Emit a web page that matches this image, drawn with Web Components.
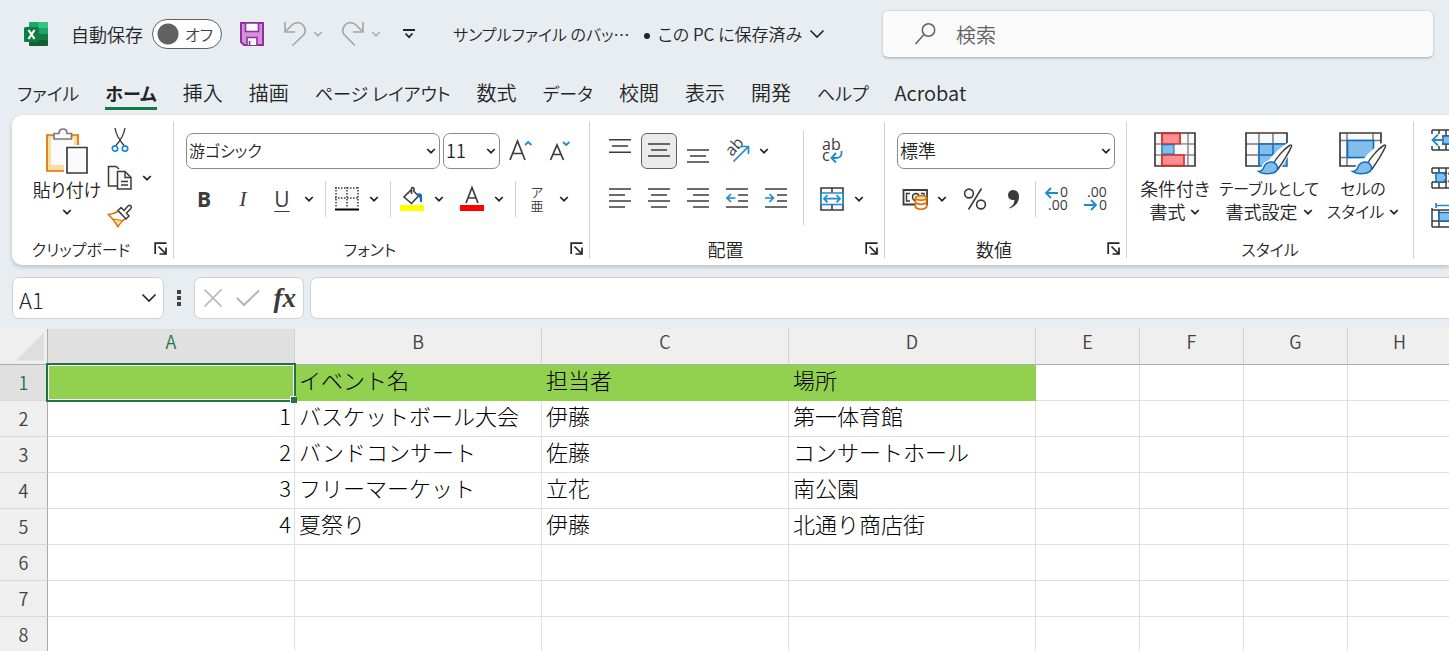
<!DOCTYPE html>
<html lang="ja">
<head>
<meta charset="utf-8">
<title>サンプルファイル - Excel</title>
<style>
html, body { margin: 0; height: 100%; overflow: hidden; }
body {
  background: #e8edf1; color: #242424;
  font-family: "Noto Sans CJK JP", "Noto Sans", sans-serif;
  font-size: 18px; font-weight: 350; line-height: 24px;
}
</style>
</head>
<body>
<excel-window></excel-window>

<script>
const DARK = '#3b3b3b', BLUE = '#1e8bd0';
const lines = (...rows) => rows.map(([x1, x2, y]) => `<path d="M${x1} ${y}H${x2}" stroke="${DARK}" stroke-width="1.6"/>`).join('');
const brush = `<path d="M44.500 13.500C39 17 31 26 28 32.500L33 37C38 30 44 20 46.500 14.500C47 13 46 12.500 44.500 13.500Z" fill="#fafafa" stroke="${DARK}" stroke-width="1.500"/><path d="M27 30C22 29.500 19.500 33 18.500 36C17.500 38.500 15.500 39.500 13.500 39.500C18 43 31 42.500 32.500 37C33 33.500 30.500 30.500 27 30Z" fill="#83bdea" stroke="#0f6cbd" stroke-width="1.500"/>`;
const digits = (x, y, s) => `<text x="${x}" y="${y}" font-family="Open Sans" font-size="14" font-weight="400" fill="${DARK}">${s}</text>`;

/* name: [width, height, svg content] */
const ICONS = {
  excel: [24, 24, `<path d="M6 0H15V6H5V1Q5 0 6 0Z" fill="#21a366"/><path d="M14.500 0H23Q24 0 24 1V6H14.500Z" fill="#33c481"/><path d="M5 6H14.500V12H5Z" fill="#107c41"/><path d="M14.500 6H24V12H14.500Z" fill="#21a366"/><path d="M5 12H14.500V18H5Z" fill="#185c37"/><path d="M14.500 12H24V18H14.500Z" fill="#107c41"/><path d="M5 18H24V23Q24 24 23 24H6Q5 24 5 23Z" fill="#185c37"/><rect y="5" width="15" height="15" rx="1.500" fill="#107c41"/><path d="M4.500 8L10.500 17M10.500 8L4.500 17" stroke="#fff" stroke-width="2.200"/>`],
  save: [24, 24, `<path d="M1 1H23V23H4L1 20Z" fill="#d591dc" stroke="#8f2fa0" stroke-width="2"/><path d="M5.500 1H18.500V9.500H5.500Z" fill="#fafafa" stroke="#8f2fa0" stroke-width="1.600"/><path d="M7 23V15.500H17V23" fill="#fafafa" stroke="#8f2fa0" stroke-width="1.600"/><path d="M9.500 19V23" stroke="#8f2fa0" stroke-width="1.600"/>`],
  undo: [24, 26, `<path d="M2 1V11H12M2.500 10.500L9 4C13 0 19 1.500 21 5.500C23 9 22 12.500 20 14.500L9.500 24.500" stroke="#a6a6a6" stroke-width="1.700"/>`],
  redo: [24, 26, `<path d="M22 1V11H12M21.500 10.500L15 4C11 0 5 1.500 3 5.500C1 9 2 12.500 4 14.500L14 24.500" stroke="#a6a6a6" stroke-width="1.700"/>`],
  chevron: [10, 6, `<path d="M1.200 1L5 4.700L8.800 1" stroke="currentColor" stroke-width="1.700"/>`],
  chevronLarge: [16, 10, `<path d="M1.500 1.500L8 8L14.500 1.500" stroke="currentColor" stroke-width="1.600"/>`],
  customize: [12, 10, `<path d="M0 1H12" stroke="#242424" stroke-width="2"/><path d="M2.500 4.500L6 8.200L9.500 4.500" stroke="#242424" stroke-width="1.800"/>`],
  search: [24, 24, `<circle cx="14.500" cy="8" r="6.200" stroke="#616161" stroke-width="1.500"/><path d="M10 12.500L1.500 22" stroke="#616161" stroke-width="1.500"/>`],
  launcher: [14, 14, `<path d="M1.200 12V1.200H12.500" stroke="#242424" stroke-width="1.700"/><path d="M4.500 4.500L11.500 11.500M12 5.500V12H5.500" stroke="#242424" stroke-width="1.700"/>`],
  paste: [44, 48, `<path d="M2 7H33V43H2Z" fill="#f8dca0" stroke="#e07000" stroke-width="1.700"/><path d="M6 10H29V37H6Z" fill="#fafafa"/><path d="M9 11V5.500H14Q14 1 18 1Q22 1 22 5.500H26.500V11Z" fill="#fafafa" stroke="#7b7b7b" stroke-width="1.700"/><path d="M19 17H43V47H19Z" fill="#fff"/><path d="M22 19.500H42V45H22Z" fill="#fafafa" stroke="${DARK}" stroke-width="1.700"/>`],
  cut: [18, 26, `<path d="M4 1C5 7 8 13 13.500 19M14 1C13 7 10 13 4.500 19" stroke="${DARK}" stroke-width="1.400"/><circle cx="4" cy="21.500" r="2.700" stroke="${BLUE}" stroke-width="1.700"/><circle cx="14" cy="21.500" r="2.700" stroke="${BLUE}" stroke-width="1.700"/>`],
  copy: [26, 26, `<path d="M10 21H1.500V1.500H9L12 4" fill="#fafafa" stroke="${DARK}" stroke-width="1.500"/><path d="M10.500 6.500H18L24 12.500V24H10.500Z" fill="#fafafa" stroke="${DARK}" stroke-width="1.500"/><path d="M18 6.500V12.500H24M14 16.500H21M14 20H21" stroke="${DARK}" stroke-width="1.400"/>`],
  painter: [26, 24, `<path d="M1.500 10.500Q7 10 11.500 7L19 14.500Q14 17 11 22.500Q7 16 1.500 10.500Z" fill="#fff" stroke="#e07000" stroke-width="1.600"/><path d="M6 15L15.500 16.500L11 22Z" fill="#f8dca0" stroke="#e07000"/><path d="M11 6.500L14 3.500L17 6.500L21 2Q22.500 .5 24 2Q25 3.500 23.500 5L19.500 9L22 12L19 15Z" fill="#fafafa" stroke="${DARK}" stroke-width="1.500"/>`],
  borders: [24, 24, `<path d="M1 1H23V21H1Z" fill="#fafafa"/><path d="M0 1H24M0 11H24" stroke="${DARK}" stroke-width="1.500" stroke-dasharray="1.500 1.500"/><path d="M1 0V21M12 0V21M23 0V21" stroke="${DARK}" stroke-width="1.500" stroke-dasharray="1.500 1.500"/><path d="M0 22.500H24" stroke="#000" stroke-width="2"/>`],
  fill: [24, 26, `<path d="M11.500 3.500L4 11L11.500 17.500L18.500 10L14 5.500V3Q14 1.500 12.500 1.500Q11.500 1.500 11.500 3V8" fill="#fafafa" stroke="${DARK}" stroke-width="1.600"/><path d="M16 8Q21 6 22 9V16H20Q20 10 17.500 9.500Z" fill="#0f6cbd"/><path d="M0 19H24V25H0Z" fill="#ff0"/>`],
  fontColor: [24, 26, `<path d="M6 17L12 1.500L18 17M8 12H16" stroke="${DARK}" stroke-width="1.700"/><path d="M0 19H24V25H0Z" fill="#f00"/>`],
  grow: [24, 24, `<path d="M1 21L8.500 2L16 21M3.800 14.500H13.200" stroke="${DARK}" stroke-width="1.700"/><path d="M16 6L19.200 3L22.500 6" stroke="${BLUE}" stroke-width="1.800"/>`],
  shrink: [22, 24, `<path d="M1.500 21L8 6L14.500 21M4 15.500H12" stroke="${DARK}" stroke-width="1.700"/><path d="M14 3L17.200 6L20.500 3" stroke="${BLUE}" stroke-width="1.800"/>`],
  top: [24, 24, lines([1, 23, 0.8], [4, 20, 7], [1, 23, 13.2]) ],
  middle: [24, 24, lines([1, 23, 5], [4, 20, 11], [1, 23, 17])],
  bottom: [24, 24, lines([1, 23, 11], [4, 20, 17], [1, 23, 23])],
  left: [24, 24, lines([1, 23, 2], [1, 17, 8], [1, 23, 14], [1, 17, 20])],
  center: [24, 24, lines([1, 23, 2], [4, 20, 8], [1, 23, 14], [4, 20, 20])],
  right: [24, 24, lines([1, 23, 2], [7, 23, 8], [1, 23, 14], [7, 23, 20])],
  outdent: [24, 24, lines([1, 23, 2], [13, 23, 8], [13, 23, 14], [1, 23, 20]) + `<path d="M10.500 11H2M6 7L2 11L6 15" stroke="${BLUE}" stroke-width="1.700"/>`],
  indent: [24, 24, lines([1, 23, 2], [13, 23, 8], [13, 23, 14], [1, 23, 20]) + `<path d="M1 11H9.500M5.500 7L9.500 11L5.500 15" stroke="${BLUE}" stroke-width="1.700"/>`],
  orient: [26, 26, `<text x="0" y="0" transform="translate(8 19) rotate(-48)" font-family="Open Sans" font-size="16" font-weight="400" fill="${DARK}">ab</text><path d="M9.500 23.500L24 9M17 8.500H24.500V16" stroke="${BLUE}" stroke-width="1.700"/>`],
  wrap: [24, 26, `<text x="2" y="12" font-family="Open Sans" font-size="16" font-weight="400" fill="${DARK}">ab</text><text x="2" y="23" font-family="Open Sans" font-size="16" font-weight="400" fill="${DARK}">c</text><path d="M21.500 13Q22.500 20 16 20H11.500M16 15L11.500 20L16 24.500" stroke="${BLUE}" stroke-width="1.900"/>`],
  merge: [24, 24, `<path d="M1 1H23V23H1ZM12 1V23" fill="#fafafa" stroke="${DARK}" stroke-width="1.600"/><path d="M1 6H23V17.500H1Z" fill="#fafafa" stroke="${BLUE}" stroke-width="1.700"/><path d="M4 11.700H20M7.500 8L4 11.700L7.500 15.400M16.500 8L20 11.700L16.500 15.400" stroke="${BLUE}" stroke-width="1.700"/>`],
  cash: [26, 24, `<path d="M1.500 3H25V17.500H1.500Z" fill="#fafafa" stroke="${DARK}" stroke-width="1.800"/><path d="M8 6.500H4.500V14H8M14 14Q10.500 13 10.500 10T14 6.500Q16.500 6.500 17 9M19 6.500H22V9" stroke="${DARK}" stroke-width="1.400"/><path d="M13.500 11V20.500Q19 24 24.500 20.500V11Z" fill="#fff" stroke="#e07000" stroke-width="1.600"/><ellipse cx="19" cy="11" rx="5.500" ry="2.200" fill="#f8dca0" stroke="#e07000" stroke-width="1.600"/><path d="M13.500 15.800Q19 19 24.500 15.800" stroke="#e07000" stroke-width="1.600"/>`],
  percent: [24, 24, `<circle cx="6" cy="6.500" r="4.400" stroke="${DARK}" stroke-width="1.600"/><circle cx="18" cy="17.500" r="4.400" stroke="${DARK}" stroke-width="1.600"/><path d="M18.500 1.500L5.500 22.500" stroke="${DARK}" stroke-width="1.600"/>`],
  comma: [14, 20, `<path d="M2 19Q7 16.500 7.500 11Q1 11.500 1 6Q1.500 1 6.500 1Q12 1.500 12 7.500Q12 16 2.500 19.500Z" fill="${DARK}"/>`],
  decUp: [26, 26, digits(16, 11, '0') + digits(4, 24, '.00') + `<path d="M14 7H2M7 2L2 7L7 12" stroke="${BLUE}" stroke-width="1.800"/>`],
  decDown: [26, 26, digits(4, 11, '.00') + digits(16, 24, '0') + `<path d="M1 19H13M8 14L13 19L8 24" stroke="${BLUE}" stroke-width="1.800"/>`],
  condFormat: [42, 36, `<path d="M1 1H41V34H1Z" fill="#fafafa"/><path d="M8 1V34M26 1V34M34 1V34M1 12H41M1 23H41" stroke="#8a8a8a" stroke-width="1.500"/><path d="M1 1H41V34H1Z" stroke="${DARK}" stroke-width="1.700"/><path d="M8 1.500H26V12H8ZM8 23H30V33.500H8Z" fill="#fc8f95" stroke="#e0281e" stroke-width="1.600"/><path d="M8 12.800H20V22H8Z" fill="#83bdea" stroke="#0f6cbd"/><path d="M21.500 12.800H33V22H21.500Z" fill="#fafafa"/>`],
  tableFormat: [48, 42, `<path d="M1 1H42V34H1Z" fill="#fafafa"/><path d="M14 1V34M28 1V12M1 12H42M1 23H14" stroke="#7a7a7a" stroke-width="1.500"/><path d="M15 34H1V1H42V12" stroke="${DARK}" stroke-width="1.700"/><path d="M14 12H42V34H14Z" fill="#83bdea"/><path d="M14 12H42V34H14ZM28 12V34M14 23H42" stroke="#0f6cbd" stroke-width="1.500"/><path d="M44 10Q30 19 24 28Q18 30 16 36L12 38L28 44L36 36L49 15Z" fill="#fff"/>` + brush],
  cellStyle: [48, 42, `<path d="M1 1H42V34H1Z" fill="#fafafa"/><path d="M8 1V34M34 1V10M1 8.500H42M1 25.500H20" stroke="#7a7a7a" stroke-width="1.500"/><path d="M22 34H1V1H42V12" stroke="${DARK}" stroke-width="1.700"/><path d="M8.500 8.500H34.500V25.500H8.500Z" fill="#83bdea" stroke="#0f6cbd" stroke-width="1.600"/><path d="M44 10Q30 19 24 28Q18 30 16 36L12 38L28 44L36 36L49 15Z" fill="#fff"/>` + brush],
  insertCells: [28, 24, `<path d="M1 2H28M1 22H28M1 2V22M8 2V22M15 2V22M22 2V22M1 8H28M1 16H28" stroke="${DARK}" stroke-width="1.500"/><path d="M12 8H28V16H12Z" fill="#83bdea" stroke="#0f6cbd" stroke-width="1.500"/><path d="M0 6H11V18H0Z" fill="#fff"/><path d="M12 12H1.500M7 6.500L1.500 12L7 17.500" stroke="${BLUE}" stroke-width="1.800"/>`],
  deleteCells: [28, 24, `<path d="M1 2H28M1 22H28M1 2V7M1 16V22M8 2V22M15 2V22M22 2V7M22 16V22M1 7H28M1 16H28" stroke="${DARK}" stroke-width="1.500"/><path d="M5 7H13L15.500 11.500L13 16H5Z" fill="#83bdea" stroke="#0f6cbd" stroke-width="1.500"/><path d="M16 6H28V17H16Z" fill="#fff"/><path d="M17 7L26 16M26 7L17 16" stroke="#e03a3a" stroke-width="1.800"/>`],
  formatCells: [28, 26, `<path d="M1 7H28M1 24H28M1 5V24M8 7V24M22 7V24M1 18H28" stroke="${DARK}" stroke-width="1.500"/><path d="M8 9.500H22V18H8Z" fill="#83bdea" stroke="#0f6cbd" stroke-width="1.500"/><path d="M5 2.500H28M5 0V5" stroke="${BLUE}" stroke-width="1.700"/>`],
  dots: [6, 18, `<path d="M1 1H5V5H1ZM1 7H5V11H1ZM1 13H5V17H1Z" fill="#424242"/>`],
  cancel: [20, 20, `<path d="M1.500 1.500L18.500 18.500M18.500 1.500L1.500 18.500" stroke="#b5b5b5" stroke-width="1.700"/>`],
  accept: [24, 18, `<path d="M1 9L8 16L23 1.500" stroke="#b5b5b5" stroke-width="2"/>`],
};

const define = (name, html) => customElements.define(name, class extends HTMLElement {
  connectedCallback() {
    if (this.shadowRoot) return;
    const root = this.attachShadow({ mode: 'open' });
    const template = document.createElement('template');
    template.innerHTML = typeof html === 'function' ? html(this) : html;
    root.append(template.content.cloneNode(true));
  }
});

const RESET = `*,:host{box-sizing:border-box}
button,input,select{font:inherit;color:inherit;margin:0;padding:0;border:0;background:none}
button{display:flex;align-items:center;justify-content:center;border-radius:6px}`;

define('ui-icon', el => {
  const [w, h, body] = ICONS[el.getAttribute('name')];
  return `<style>:host{display:block;flex:none}svg{display:block;overflow:visible}</style>
  <svg width="${w}" height="${h}" viewBox="0 0 ${w} ${h}" fill="none" aria-hidden="true">${body}</svg>`;
});

/* Square toolbar button; "menu" adds the drop-down arrow beside it. */
define('tool-button', el => `<style>${RESET}
  :host{display:flex;flex:none;height:36px;color:#3b3b3b}
  .main{width:36px;height:36px}
  .arrow{width:18px;height:36px;color:#242424}
  :host([pressed]) .main{background:#ebebeb;border:1px solid #616161}
  </style>
  <button class="main" aria-label="${el.getAttribute('label')}">${el.hasAttribute('icon') ? `<ui-icon name="${el.getAttribute('icon')}"></ui-icon>` : '<slot></slot>'}</button>
  ${el.hasAttribute('menu') ? `<button class="arrow" aria-label="${el.getAttribute('label')}のオプション"><ui-icon name="chevron"></ui-icon></button>` : ''}`);

/* Large button: picture over one or two lines of text. */
define('big-button', el => `<style>${RESET}
  :host{display:block;flex:none}
  button{width:100%;flex-direction:column;white-space:nowrap;line-height:23px}
  .pic{display:flex;align-items:flex-start;height:var(--pic,44px)}
  .text{display:flex;flex-direction:column;align-items:center}
  </style><button><span class="pic"><ui-icon name="${el.getAttribute('icon')}"></ui-icon></span><span class="text"><slot></slot></span></button>`);

define('combo-box', el => `<style>${RESET}
  :host{display:grid;height:36px;align-items:center}
  select,ui-icon{grid-area:1/1}
  select{appearance:none;width:100%;height:36px;padding:0 20px 2px 2px;border:1px solid #8a8a8a;border-radius:7px;background:#fff}
  ui-icon{justify-self:end;margin-right:4px;pointer-events:none}
  </style><select aria-label="${el.getAttribute('label')}"><option>${el.getAttribute('value')}</option></select><ui-icon name="chevron"></ui-icon>`);

define('ribbon-group', el => `<style>${RESET}
  :host{display:grid;grid-template-rows:1fr 18px;flex:none;border-right:1px solid #d1d1d1}
  :host([last]){border:0}
  .body{display:flex}
  footer{display:flex;align-items:center;line-height:18px;white-space:nowrap}
  footer span{flex:1;text-align:center}
  :host([kana]) footer span{font-size:16px}
  footer button{width:22px;height:18px;margin-right:1px}
  </style><div class="body"><slot></slot></div>
  <footer><span>${el.getAttribute('name') || ''}</span>${el.hasAttribute('launcher') ? `<button aria-label="${el.getAttribute('name')}の設定"><ui-icon name="launcher"></ui-icon></button>` : ''}</footer>`);

define('title-bar', `<style>${RESET}
  :host{display:flex;align-items:center;height:68px;padding:0 15px 0 24px;white-space:nowrap;font-feature-settings:"palt"}
  .left{display:flex;align-items:center;flex:none;width:858px}
  .auto{display:flex;align-items:center;gap:9px;margin-left:23px}
  .switch{display:grid;align-items:center;width:70px;height:30px}
  .switch input,.switch span{grid-area:1/1}
  .switch input{appearance:none;width:70px;height:30px;border:1px solid #616161;border-radius:15px;background:radial-gradient(circle at 15px 14px,#616161 10px,#fff 11px)}
  .switch span{justify-self:end;margin-right:9px;font-size:16px;color:#424242;pointer-events:none}
  .tools{display:flex;align-items:center;margin-left:18px;color:#b0b0b0}
  .tools button:nth-child(2){margin-left:19px}
  .tools button:nth-child(4){margin-left:12px}
  .arrow{width:22px;height:24px}
  .custom{margin-left:16px}
  .file{margin-left:38px;width:172px;font-size:16px}
  .dot{width:6px;height:6px;border-radius:3px;background:#242424;margin:4px 8px 0 19px}
  .state{gap:7px;font-size:17px}
  .search{flex:1;display:flex;align-items:center;gap:18px;height:48px;padding-left:31px;border:1px solid #d6d9dc;border-bottom-color:#bcbfc2;border-radius:6px;background:#fafafa;box-shadow:0 1px 2px #0002}
  .search input{flex:1;min-width:0;height:40px;font-size:20px;outline:0}
  .search input::placeholder{color:#616161;opacity:1}
  </style>
  <div class="left">
    <ui-icon name="excel"></ui-icon>
    <label class="auto">自動保存<span class="switch"><input type="checkbox" role="switch"><span>オフ</span></span></label>
    <div class="tools">
      <button aria-label="上書き保存"><ui-icon name="save"></ui-icon></button>
      <button aria-label="元に戻す"><ui-icon name="undo"></ui-icon></button><button class="arrow" aria-label="元に戻す履歴"><ui-icon name="chevron"></ui-icon></button>
      <button aria-label="やり直し"><ui-icon name="redo"></ui-icon></button><button class="arrow" aria-label="やり直し履歴"><ui-icon name="chevron"></ui-icon></button>
      <button class="custom" aria-label="クイック アクセス ツール バーのカスタマイズ"><ui-icon name="customize"></ui-icon></button>
    </div>
    <span class="file">サンプルファイル のバッ…</span><i class="dot"></i>
    <button class="state">この PC に保存済み<ui-icon name="chevronLarge"></ui-icon></button>
  </div>
  <label class="search"><ui-icon name="search"></ui-icon><input type="search" placeholder="検索" aria-label="検索"></label>`);

define('ribbon-tabs', `<style>${RESET}
  :host{display:block;height:47px;padding:10px 0 0 17px;font-size:20px;line-height:30px;font-feature-settings:"palt"}
  nav{display:flex;gap:26px;white-space:nowrap}
  a{color:inherit;text-decoration:none;height:32px;border-bottom:3px solid transparent}
  a.kana{font-size:18px}
  a[aria-current]{font-weight:700;border-color:#107c41}
  </style><nav>${['ファイル', 'ホーム', '挿入', '描画', 'ページ レイアウト', '数式', 'データ', '校閲', '表示', '開発', 'ヘルプ', 'Acrobat']
    .map(t => `<a href="#"${/[ァ-ン]/.test(t) ? ' class="kana"' : ''}${t === 'ホーム' ? ' aria-current="page"' : ''}>${t}</a>`).join('')}</nav>`);

define('excel-ribbon', `<style>${RESET}
  :host{display:flex;height:150px;margin-left:12px;padding:7px 0;background:#fff;border-radius:10px 0 0 10px;box-shadow:0 2px 4px #0003;overflow:hidden;font-feature-settings:"palt"}
  .rows{display:flex;flex-direction:column;gap:12px;padding-top:11px}
  .row{display:flex;gap:3px}
  .sep{width:11px;height:36px;margin:0 -3px;background:linear-gradient(#d1d1d1,#d1d1d1) 7px 0/1px 100% no-repeat}
  .sep.near{width:7px;background-position-x:3px}
  .space{margin-left:3px}
  .kana{font-size:16px}
  .clip{width:162px}.font{width:416px}.align{width:295px}.num{width:242px}.style{width:287px}.cells{width:160px}
  .clip big-button{width:78px;margin:6px 0 0 16px;--pic:50px}
  .clip big-button ui-icon{margin-top:8px}
  .stack{display:flex;flex-direction:column;gap:2px}
  .clip .stack{margin-left:-4px}
  .font .rows,.num .rows,.align .rows{padding-left:12px}
  .name{width:254px;font-size:16px}.size{width:57px}.numfmt{width:218px}
  .bar{width:1px;height:94px;margin:9px 0 0 9px;background:#d1d1d1}
  .align .second{padding-left:10px}
  .style big-button{margin-top:10px;width:84px;--pic:45px}
  .style big-button:nth-child(1){margin-left:6px}
  .style big-button:nth-child(2){width:104px}
  .line{display:flex;align-items:center;gap:5px}
  .cells .stack{padding-left:17px}
  .cells .stack ui-icon{height:36px;display:flex;align-items:center}
  b,i,u{font:400 21px/24px "Open Sans",sans-serif}
  b{font-weight:700}i{font:italic 22px/24px "Liberation Serif",serif}u{text-underline-offset:4px;text-decoration-thickness:1px}
  .ruby{font-size:13px;line-height:14px;text-align:center}
  </style>
  <ribbon-group class="clip" name="クリップボード" launcher kana>
    <big-button icon="paste"><span>貼り付け</span><ui-icon name="chevron"></ui-icon></big-button>
    <div class="stack"><tool-button label="切り取り" icon="cut"></tool-button><tool-button label="コピー" icon="copy" menu></tool-button><tool-button label="書式のコピー" icon="painter"></tool-button></div>
  </ribbon-group>
  <ribbon-group class="font" name="フォント" launcher kana>
    <div class="rows">
      <div class="row"><combo-box class="name" label="フォント" value="游ゴシック"></combo-box><combo-box class="size" label="フォント サイズ" value="11"></combo-box><tool-button label="フォント サイズの拡大" icon="grow"></tool-button><tool-button label="フォント サイズの縮小" icon="shrink"></tool-button></div>
      <div class="row"><tool-button label="太字"><b>B</b></tool-button><tool-button label="斜体"><i>I</i></tool-button><tool-button label="下線" menu><u>U</u></tool-button><span class="sep"></span><tool-button label="罫線" icon="borders" menu></tool-button><span class="sep"></span><tool-button label="塗りつぶしの色" icon="fill" menu></tool-button><tool-button class="space" label="フォントの色" icon="fontColor" menu></tool-button><span class="sep"></span><tool-button label="ふりがな" menu><span class="ruby">ア<br>亜</span></tool-button></div>
    </div>
  </ribbon-group>
  <ribbon-group class="align" name="配置" launcher>
    <div class="rows">
      <div class="row"><tool-button label="上揃え" icon="top"></tool-button><tool-button label="上下中央揃え" icon="middle" pressed></tool-button><tool-button label="下揃え" icon="bottom"></tool-button><tool-button label="方向" icon="orient" menu></tool-button></div>
      <div class="row"><tool-button label="左揃え" icon="left"></tool-button><tool-button label="中央揃え" icon="center"></tool-button><tool-button label="右揃え" icon="right"></tool-button><tool-button label="インデントを減らす" icon="outdent"></tool-button><tool-button label="インデントを増やす" icon="indent"></tool-button></div>
    </div>
    <span class="bar"></span>
    <div class="rows second"><tool-button label="折り返して全体を表示する" icon="wrap"></tool-button><tool-button label="セルを結合して中央揃え" icon="merge" menu></tool-button></div>
  </ribbon-group>
  <ribbon-group class="num" name="数値" launcher>
    <div class="rows">
      <combo-box class="numfmt" label="表示形式" value="標準"></combo-box>
      <div class="row"><tool-button label="通貨表示形式" icon="cash" menu></tool-button><tool-button class="space" label="パーセント スタイル" icon="percent"></tool-button><tool-button label="桁区切りスタイル" icon="comma"></tool-button><span class="sep near"></span><tool-button label="小数点以下の表示桁数を増やす" icon="decUp"></tool-button><tool-button label="小数点以下の表示桁数を減らす" icon="decDown"></tool-button></div>
    </div>
  </ribbon-group>
  <ribbon-group class="style" name="スタイル" kana>
    <big-button icon="condFormat"><span>条件付き</span><span class="line">書式<ui-icon name="chevron"></ui-icon></span></big-button>
    <big-button icon="tableFormat"><span class="kana">テーブルとして</span><span class="line">書式設定<ui-icon name="chevron"></ui-icon></span></big-button>
    <big-button icon="cellStyle"><span class="kana">セルの</span><span class="line kana">スタイル<ui-icon name="chevron"></ui-icon></span></big-button>
  </ribbon-group>
  <ribbon-group class="cells" last>
    <div class="stack"><ui-icon name="insertCells"></ui-icon><ui-icon name="deleteCells"></ui-icon><ui-icon name="formatCells"></ui-icon></div>
  </ribbon-group>`);

define('formula-bar', `<style>${RESET}
  :host{display:flex;align-items:center;height:64px;padding:2px 0 0 12px}
  .box{display:flex;align-items:center;height:42px;border:1px solid #d1d1d1;border-radius:7px;background:#fff}
  .name{width:152px;padding:0 6px}
  .name input{flex:1;min-width:0;font-size:22px;font-weight:300;height:38px;padding-top:2px;outline:0}
  .handle{width:30px;display:flex;justify-content:center}
  .keys{width:110px;justify-content:space-between;padding:0 7px 0 8px}
  .fx{font:italic 700 27px/36px "Liberation Serif",serif;color:#3b3b3b}
  .formula{flex:1;margin-left:6px;border-right:0;border-radius:7px 0 0 7px}
  .formula input{flex:1;height:36px;padding:0 8px;outline:0}
  </style>
  <div class="box name"><input value="A1" aria-label="名前ボックス"><button aria-label="名前の一覧"><ui-icon name="chevronLarge"></ui-icon></button></div>
  <span class="handle"><ui-icon name="dots"></ui-icon></span>
  <div class="box keys"><button aria-label="キャンセル"><ui-icon name="cancel"></ui-icon></button><button aria-label="入力"><ui-icon name="accept"></ui-icon></button><button class="fx" aria-label="関数の挿入">fx</button></div>
  <div class="box formula"><input aria-label="数式バー"></div>`);

const COLUMNS = [...'ABCDEFGH'];
const DATA = [
  ['', 'イベント名', '担当者', '場所'],
  ['1', 'バスケットボール大会', '伊藤', '第一体育館'],
  ['2', 'バンドコンサート', '佐藤', 'コンサートホール'],
  ['3', 'フリーマーケット', '立花', '南公園'],
  ['4', '夏祭り', '伊藤', '北通り商店街'],
  [], [], [],
];
define('sheet-grid', `<style>${RESET}
  :host{display:block;background:#fff}
  table{border-collapse:separate;border-spacing:0;table-layout:fixed;width:1452px}
  .rowhead{width:48px}.wide{width:247px}.std{width:104px}
  tr{height:36px}
  th{font-size:18px;font-weight:inherit;color:#424242;background:#efefef;padding:0 0 1px;line-height:20px}
  thead th{border-right:1px solid #d0d0d0;border-bottom:1px solid #ababab;padding-bottom:11px}
  tbody th{border-right:1px solid #ababab;border-bottom:1px solid #d8d8d8}
  th.on{background:#e0e0e0;color:#217346}
  thead .corner{border-right-color:#ababab;padding:0}
  .corner i{display:block;margin:0 3px 0 auto;width:28px;height:28px;background:#dedede;clip-path:polygon(100% 0,100% 100%,0 100%)}
  td{font-size:22px;font-weight:300;line-height:29px;padding:0 4px 6px;border-right:1px solid #e0e0e0;border-bottom:1px solid #e0e0e0;white-space:nowrap;color:#000}
  td.n{text-align:right;padding-right:3px}
  td.fill{background:#92d050;border-color:#92d050}
  .active{position:relative}
  .active::before{content:"";position:absolute;inset:-2px;border:2px solid #217346;box-shadow:inset 0 0 0 1px #fff}
  .active::after{content:"";position:absolute;right:-3px;bottom:-3px;width:6px;height:6px;background:#217346;box-shadow:-1px -1px 0 #fff}
  </style>
  <table>
    <colgroup><col class="rowhead">${COLUMNS.map((c, i) => `<col class="${i < 4 ? 'wide' : 'std'}">`).join('')}</colgroup>
    <thead><tr><th class="corner"><i></i></th>${COLUMNS.map((c, i) => `<th scope="col"${i ? '' : ' class="on"'}>${c}</th>`).join('')}</tr></thead>
    <tbody>${DATA.map((row, r) => `<tr><th scope="row"${r ? '' : ' class="on"'}>${r + 1}</th>${COLUMNS.map((c, i) =>
      `<td class="${!r && i < 4 ? 'fill ' : ''}${!r && !i ? 'active ' : ''}${i ? '' : 'n'}">${row[i] || ''}</td>`).join('')}</tr>`).join('')}</tbody>
  </table>`);

define('excel-window', `<style>
  :host{display:grid;grid-template-columns:minmax(0,1fr);grid-template-rows:auto auto auto auto 1fr;height:100vh;overflow:hidden}
  </style><title-bar></title-bar><ribbon-tabs></ribbon-tabs><excel-ribbon></excel-ribbon><formula-bar></formula-bar><sheet-grid></sheet-grid>`);
</script>
</body>
</html>
